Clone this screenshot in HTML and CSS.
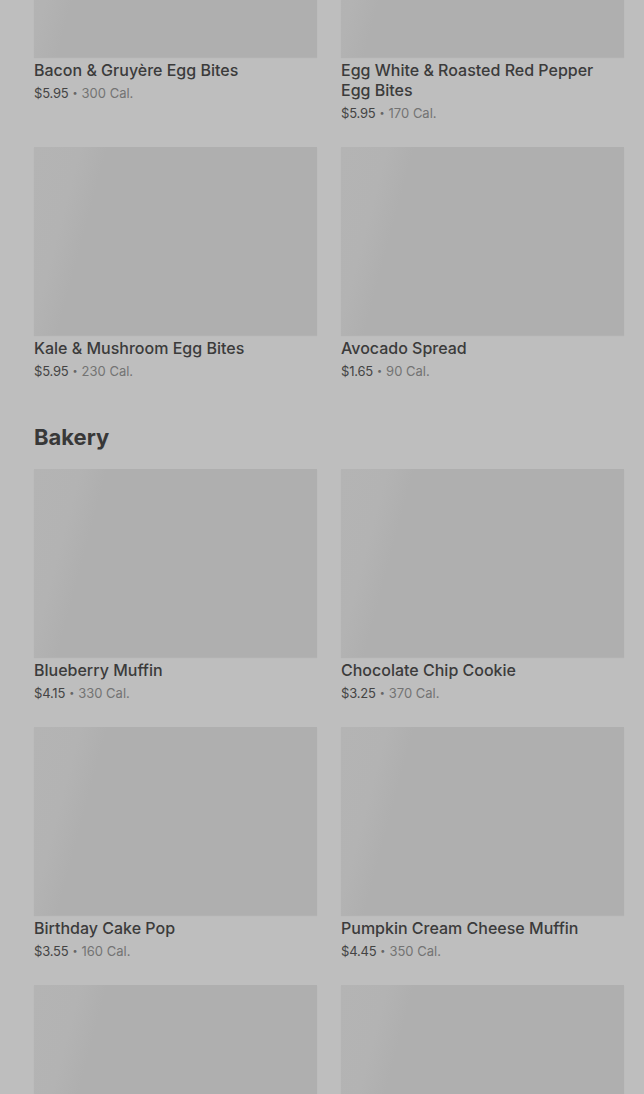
FILE: index.html
```html
<!DOCTYPE html>
<html>
<head>
  <title>Menu</title>
  <link rel="stylesheet" href="styles.css">
</head>
<body>
  <div class="menu">
    <div class="grid first">
      <div class="item">
        <div class="thumb"></div>
        <div class="name">Bacon &amp; Gruyère Egg Bites</div>
        <div class="meta"><span class="price">$5.95</span><span class="dot">•</span><span class="cal">300 Cal.</span></div>
      </div>
      <div class="item">
        <div class="thumb"></div>
        <div class="name">Egg White &amp; Roasted Red Pepper Egg Bites</div>
        <div class="meta"><span class="price">$5.95</span><span class="dot">•</span><span class="cal">170 Cal.</span></div>
      </div>
      <div class="item">
        <div class="thumb"></div>
        <div class="name">Kale &amp; Mushroom Egg Bites</div>
        <div class="meta"><span class="price">$5.95</span><span class="dot">•</span><span class="cal">230 Cal.</span></div>
      </div>
      <div class="item">
        <div class="thumb"></div>
        <div class="name">Avocado Spread</div>
        <div class="meta"><span class="price">$1.65</span><span class="dot">•</span><span class="cal">90 Cal.</span></div>
      </div>
    </div>

    <h2 class="section-title">Bakery</h2>

    <div class="grid">
      <div class="item">
        <div class="thumb"></div>
        <div class="name">Blueberry Muffin</div>
        <div class="meta"><span class="price">$4.15</span><span class="dot">•</span><span class="cal">330 Cal.</span></div>
      </div>
      <div class="item">
        <div class="thumb"></div>
        <div class="name">Chocolate Chip Cookie</div>
        <div class="meta"><span class="price">$3.25</span><span class="dot">•</span><span class="cal">370 Cal.</span></div>
      </div>
      <div class="item">
        <div class="thumb"></div>
        <div class="name">Birthday Cake Pop</div>
        <div class="meta"><span class="price">$3.55</span><span class="dot">•</span><span class="cal">160 Cal.</span></div>
      </div>
      <div class="item">
        <div class="thumb"></div>
        <div class="name">Pumpkin Cream Cheese Muffin</div>
        <div class="meta"><span class="price">$4.45</span><span class="dot">•</span><span class="cal">350 Cal.</span></div>
      </div>
      <div class="item">
        <div class="thumb"></div>
      </div>
      <div class="item">
        <div class="thumb"></div>
      </div>
    </div>
  </div>
</body>
</html>
```

FILE: styles.css
```css
body {
  margin: 0;
  background: #bebebe;
  font-family: Inter, "Noto Sans", sans-serif;
  color: #3a3a3a;
  overflow: hidden;
}

.menu {
  padding: 0 20px 0 34px;
  margin-top: -131px;
}

.grid {
  display: grid;
  grid-template-columns: 283px 283px;
  column-gap: 24px;
  row-gap: 24px;
}

.thumb {
  height: 188px;
  background: linear-gradient(105deg, #b4b4b4 0%, #b3b3b3 14%, #afafaf 22%, #afafaf 100%);
  box-shadow: 0 1px 1px rgba(0, 0, 0, 0.06);
}

.name {
  margin-top: 3px;
  font-size: 16px;
  font-weight: 500;
  line-height: 20px;
  color: #3b3b3b;
  padding-right: 20px;
}

.meta {
  margin-top: 3px;
  display: flex;
  align-items: center;
  gap: 4px;
  height: 20px;
  font-size: 13px;
  line-height: 20px;
  color: #737373;
}

.price {
  color: #444;
  letter-spacing: -0.2px;
}

.dot {
  font-size: 9px;
  line-height: 20px;
  color: #666;
}

.section-title {
  margin: 42px 0 18px;
  font-size: 22px;
  line-height: 28px;
  font-weight: 700;
  color: #383838;
}
```
